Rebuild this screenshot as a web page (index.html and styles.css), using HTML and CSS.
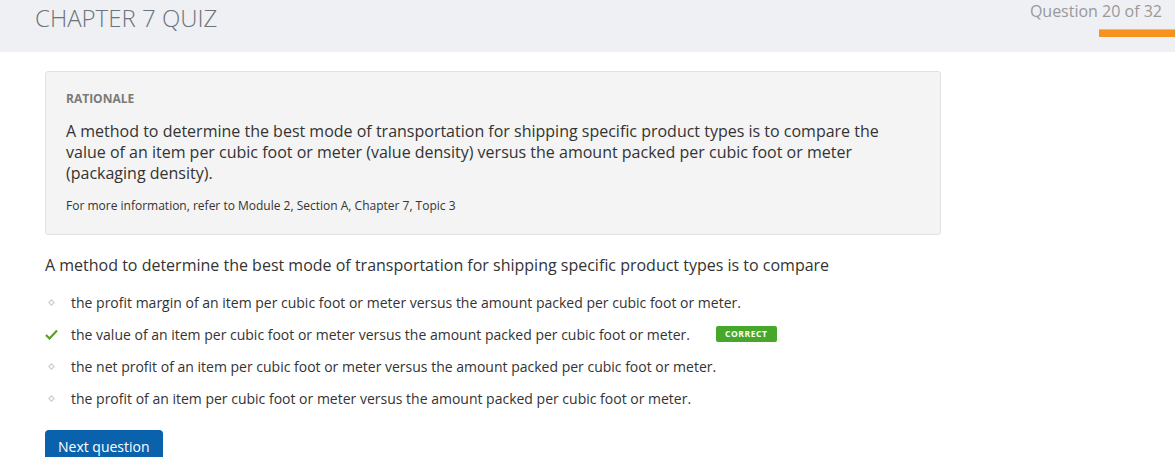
FILE: index.html
```html
<!DOCTYPE html>
<html>
<head>
<meta charset="utf-8">
<link rel="stylesheet" href="styles.css">
</head>
<body>
<header class="topbar">
  <h1 class="title">CHAPTER 7 QUIZ</h1>
  <div class="progress">
    <div class="progress-text">Question 20 of 32</div>
    <div class="progress-bar"></div>
  </div>
</header>
<main class="content">
  <section class="rationale">
    <h2 class="rationale-label">RATIONALE</h2>
    <p class="rationale-text">A method to determine the best mode of transportation for shipping specific product types is to compare the value of an item per cubic foot or meter (value density) versus the amount packed per cubic foot or meter (packaging density).</p>
    <p class="rationale-ref">For more information, refer to Module 2, Section A, Chapter 7, Topic 3</p>
  </section>
  <p class="question">A method to determine the best mode of transportation for shipping specific product types is to compare</p>
  <ul class="options">
    <li class="option"><span class="mark"><svg class="dot" width="7" height="7" viewBox="0 0 7 7"><path d="M3.5 0.8 L6.2 3.5 L3.5 6.2 L0.8 3.5 Z" fill="none" stroke="#cfcfcf" stroke-width="1.2"/></svg></span><span class="opt-text">the profit margin of an item per cubic foot or meter versus the amount packed per cubic foot or meter.</span></li>
    <li class="option"><span class="mark"><svg width="13" height="11" viewBox="0 0 13 11"><path d="M1 6 L4.5 9.5 L12 1.5" fill="none" stroke="#5aa02c" stroke-width="2.2"/></svg></span><span class="opt-text">the value of an item per cubic foot or meter versus the amount packed per cubic foot or meter.</span><span class="badge">CORRECT</span></li>
    <li class="option"><span class="mark"><svg class="dot" width="7" height="7" viewBox="0 0 7 7"><path d="M3.5 0.8 L6.2 3.5 L3.5 6.2 L0.8 3.5 Z" fill="none" stroke="#cfcfcf" stroke-width="1.2"/></svg></span><span class="opt-text">the net profit of an item per cubic foot or meter versus the amount packed per cubic foot or meter.</span></li>
    <li class="option"><span class="mark"><svg class="dot" width="7" height="7" viewBox="0 0 7 7"><path d="M3.5 0.8 L6.2 3.5 L3.5 6.2 L0.8 3.5 Z" fill="none" stroke="#cfcfcf" stroke-width="1.2"/></svg></span><span class="opt-text">the profit of an item per cubic foot or meter versus the amount packed per cubic foot or meter.</span></li>
  </ul>
  <button class="next-btn">Next question</button>
</main>
</body>
</html>
```
FILE: styles.css
```css
* { box-sizing: border-box; }
html, body { margin: 0; padding: 0; }
body {
  font-family: "Open Sans", "Liberation Sans", sans-serif;
  color: #333;
  background: #fff;
  overflow: hidden;
}
.topbar {
  height: 52px;
  background: #eff0f4;
  display: flex;
  justify-content: space-between;
  align-items: flex-start;
}
.title {
  margin: 0;
  padding: 2px 0 0 35px;
  font-size: 24px;
  font-weight: 300;
  color: #6c737b;
  line-height: 32px;
}
.progress {
  display: flex;
  flex-direction: column;
  align-items: flex-end;
}
.progress-text {
  font-size: 16px;
  color: #999;
  line-height: 22px;
  padding: 0 13px 0 0;
}
.progress-bar {
  width: 76px;
  height: 8px;
  margin-top: 7px;
  background: #f7921e;
  border-top: 1px solid #e9b88a;
}
.content {
  padding: 19px 0 0 45px;
}
.rationale {
  width: 896px;
  background: #f4f4f4;
  border: 1px solid #e2e2e2;
  border-radius: 3px;
  padding: 18px 20px 20px 20px;
}
.rationale-label {
  margin: 0;
  font-size: 12px;
  font-weight: 700;
  color: #7a7a7a;
  line-height: 18px;
}
.rationale-text {
  margin: 13px 0 0 0;
  font-size: 16px;
  line-height: 21px;
  color: #333;
  max-width: 840px;
}
.rationale-ref {
  margin: 13px 0 0 0;
  font-size: 12px;
  line-height: 17px;
  color: #333;
}
.question {
  margin: 19px 0 0 0;
  font-size: 16px;
  line-height: 22px;
  color: #333;
}
.options {
  list-style: none;
  margin: 10px 0 0 0;
  padding: 0;
}
.option {
  display: flex;
  align-items: center;
  height: 32px;
  font-size: 14px;
  color: #333;
}
.mark {
  width: 26px;
  display: flex;
  align-items: center;
  justify-content: flex-start;
}
.mark .dot { margin-left: 3px; }
.badge {
  margin-left: 26px;
  background: #45a82b;
  color: #fff;
  font-size: 8.5px;
  font-weight: 700;
  letter-spacing: 0.6px;
  line-height: 16px;
  height: 16px;
  padding: 0 9px;
  border-radius: 2px;
}
.next-btn {
  margin-top: 16px;
  background: #0b62ac;
  color: #fff;
  border: none;
  border-radius: 4px;
  font-family: "Open Sans", "Liberation Sans", sans-serif;
  font-size: 14px;
  padding: 7px 13px 10px 13px;
  line-height: 20px;
}
```
